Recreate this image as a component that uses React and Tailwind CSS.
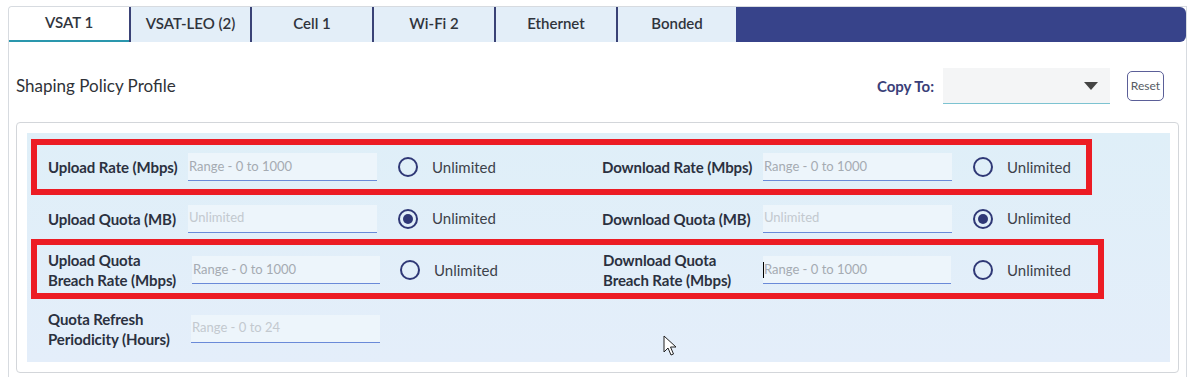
import { useState } from 'react';

const tabs = ['VSAT 1', 'VSAT-LEO (2)', 'Cell 1', 'Wi-Fi 2', 'Ethernet', 'Bonded'];
const tabWidths = ['w-[120px]', 'w-[121px]', 'w-[122px]', 'w-[122px]', 'w-[122px]', 'w-[120px]'];

function Radio({ checked }) {
    return (
        <span className="flex h-[20px] w-[20px] shrink-0 items-center justify-center rounded-full border-2 border-[#2f3876]">
            {checked && <span className="h-[10px] w-[10px] rounded-full bg-[#2f3876]" />}
        </span>
    );
}

function Field({ label, placeholder, checked, disabled, caret, labelW, inputW, radioGap, colW, showRadio = true }) {
    return (
        <div className={`flex items-center ${colW}`}>
            <div className={`${labelW} shrink-0 text-[15px] font-bold leading-[20px] tracking-[-0.1px] text-[#2b3140]`}>{label}</div>
            <div className={`relative flex h-[28px] ${inputW} shrink-0 items-center border-b border-[#6a8ad8] bg-[#edf5fb]`}>
                {caret && <span className="absolute left-0 top-[6px] h-[16px] w-px bg-black" />}
                <span className={`pl-[1px] text-[13px] ${disabled ? 'text-[#c3c9cf]' : 'text-[#a5abb2]'}`}>{placeholder}</span>
            </div>
            {showRadio && (
                <div className={`flex items-center ${radioGap}`}>
                    <Radio checked={checked} />
                    <span className="ml-[14px] text-[15px] text-[#3d424a]">Unlimited</span>
                </div>
            )}
        </div>
    );
}

export default function App() {
    const [active] = useState(0);

    return (
        <div className="relative h-[377px] w-[1192px] overflow-hidden bg-white pl-[8px] pr-[5px] pt-[6px]" style={{ fontFamily: 'Lato, "Noto Sans", sans-serif' }}>
            <div className="h-[400px] rounded-tl-[4px] border-l border-r border-t border-[#d7dbe0]">
                {/* Tabs */}
                <div className="flex h-[35px]">
                    {tabs.map((t, i) => (
                        <div
                            key={t}
                            className={`flex ${tabWidths[i]} items-center justify-center pb-[2px] text-[15px] font-semibold text-[#30343c] ${
                                i === active
                                    ? 'rounded-tl-[4px] border-b-2 border-[#2a97ad] bg-white'
                                    : 'border-l-2 border-[#3a4276] bg-[#e3eef8]'
                            }`}
                        >
                            {t}
                        </div>
                    ))}
                    <div className="flex-1 rounded-r-[6px] bg-[#37438a]" />
                </div>

                {/* Header */}
                <div className="flex h-[80px] items-center pl-[7px] pr-[22px] pt-[8px]">
                    <div className="text-[17px] text-[#2f3238]">Shaping Policy Profile</div>
                    <div className="ml-auto flex items-center">
                        <span className="text-[15px] font-bold text-[#3a4079]">Copy To:</span>
                        <div className="ml-[9px] flex h-[36px] w-[167px] items-center justify-end border-b border-[#7cc3d1] bg-[#f4f5f6] pr-[12px]">
                            <span className="h-0 w-0 border-l-[7px] border-r-[7px] border-t-[8px] border-l-transparent border-r-transparent border-t-[#444]" />
                        </div>
                        <button className="ml-[17px] flex h-[30px] w-[37px] items-center justify-center rounded-[5px] border border-[#5b5f98] text-[12px] text-[#555a63]">
                            Reset
                        </button>
                    </div>
                </div>

                {/* Card */}
                <div className="mx-[7px] rounded-[4px] border border-[#d3d6da] p-[10px] pr-[8px]">
                    <div className="h-[229px] bg-gradient-to-b from-[#dfeff8] to-[#e4eefa] pl-[4px] pt-[6px]">
                        <div className="flex h-[56px] w-[1061px] items-center border-[6px] border-[#ec1c24] pl-[11px]">
                            <Field label="Upload Rate (Mbps)" placeholder="Range - 0 to 1000" labelW="w-[140px]" inputW="w-[189px]" radioGap="ml-[21px]" colW="w-[554px]" />
                            <Field label="Download Rate (Mbps)" placeholder="Range - 0 to 1000" labelW="w-[161px]" inputW="w-[189px]" radioGap="ml-[21px]" colW="" />
                        </div>
                        <div className="flex h-[44px] w-[1061px] items-center border-[6px] border-transparent pl-[11px] pt-[3px]">
                            <Field label="Upload Quota (MB)" placeholder="Unlimited" disabled checked labelW="w-[140px]" inputW="w-[189px]" radioGap="ml-[21px]" colW="w-[554px]" />
                            <Field label="Download Quota (MB)" placeholder="Unlimited" disabled checked labelW="w-[161px]" inputW="w-[189px]" radioGap="ml-[21px]" colW="" />
                        </div>
                        <div className="flex h-[60px] w-[1073px] items-center border-[6px] border-[#ec1c24] pl-[11px] pt-[2px]">
                            <Field label={<>Upload Quota<br />Breach Rate (Mbps)</>} placeholder="Range - 0 to 1000" labelW="w-[144px]" inputW="w-[188px]" radioGap="ml-[20px]" colW="w-[555px]" />
                            <Field label={<>Download Quota<br />Breach Rate (Mbps)</>} placeholder="Range - 0 to 1000" caret labelW="w-[160px]" inputW="w-[188px]" radioGap="ml-[22px]" colW="" />
                        </div>
                        <div className="flex h-[59px] w-[1073px] items-center border-[6px] border-transparent pl-[11px]">
                            <Field label={<>Quota Refresh<br />Periodicity (Hours)</>} placeholder="Range - 0 to 24" disabled showRadio={false} labelW="w-[143px]" inputW="w-[189px]" radioGap="" colW="w-[555px]" />
                        </div>
                    </div>
                </div>
            </div>

            {/* Mouse cursor */}
            <svg className="absolute left-[663px] top-[335px]" width="14" height="22" viewBox="0 0 14 22">
                <path d="M1 1 L1 17 L5 13 L8 20 L10.5 19 L7.5 12 L13 12 Z" fill="white" stroke="#222" strokeWidth="1" strokeLinejoin="round" />
            </svg>
        </div>
    );
}
